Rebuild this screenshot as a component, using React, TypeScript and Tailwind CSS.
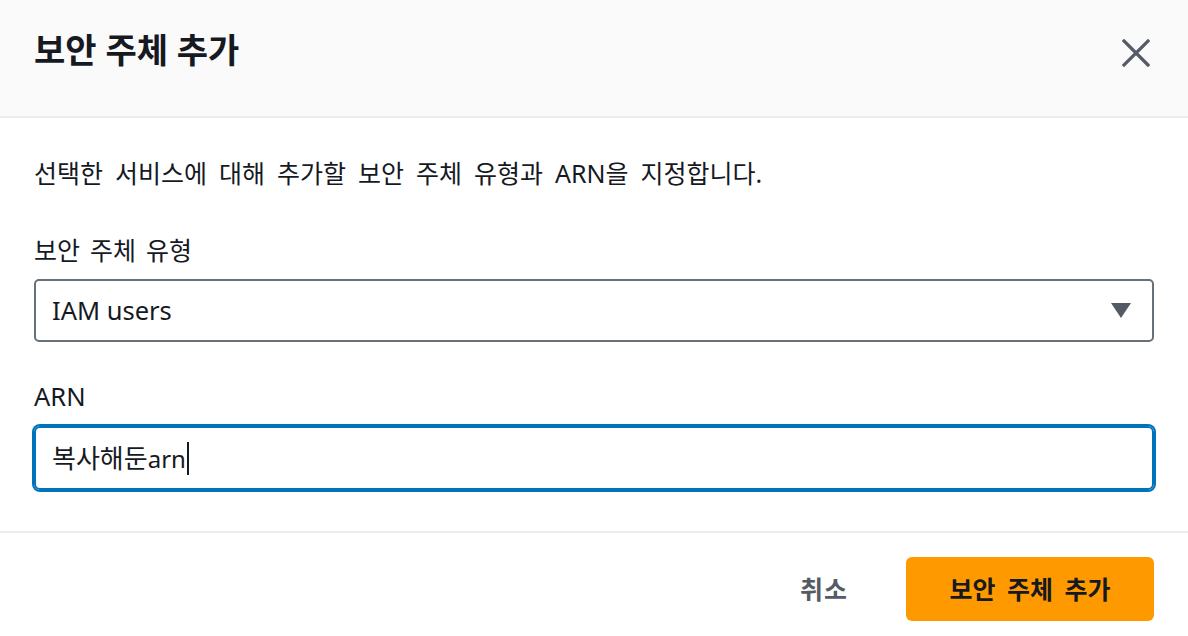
import React from "react";

const font = { fontFamily: '"Noto Sans", "Noto Sans CJK KR", sans-serif' };

function CloseIcon() {
  return (
    <svg width="28" height="28" viewBox="0 0 28 28" fill="none">
      <path d="M2 2 L26 26 M26 2 L2 26" stroke="#545b64" strokeWidth="3.2" strokeLinecap="square" />
    </svg>
  );
}

function Caret() {
  return (
    <svg width="20" height="15" viewBox="0 0 20 15">
      <path d="M0 0 H20 L10 15 Z" fill="#545b64" />
    </svg>
  );
}

export default function App() {
  return (
    <div className="w-[1188px] h-[636px] bg-white text-[#16191f] overflow-hidden" style={font}>
      {/* header */}
      <div className="h-[118px] bg-[#fafafa] border-b-2 border-[#eaeded] flex items-start justify-between pl-[34px] pr-[38px] pt-[28px]">
        <h1 className="text-[34px] leading-[44px] font-bold">보안 주체 추가</h1>
        <button className="mt-[11px]">
          <CloseIcon />
        </button>
      </div>

      {/* body */}
      <div className="px-[34px] pt-[39px] pb-[41px] border-b-2 border-[#eaeded]">
        <p className="text-[25px] leading-[32px] [word-spacing:5.5px]">
          선택한 서비스에 대해 추가할 보안 주체 유형과 ARN을 지정합니다.
        </p>

        <div className="mt-[45px] text-[25px] leading-[32px] [word-spacing:3.5px]">보안 주체 유형</div>
        <div className="mt-[13px] h-[63px] border-2 border-[#687078] rounded-[5px] flex items-center justify-between pl-[16px] pr-[21px]">
          <span className="text-[25.5px]">IAM users</span>
          <Caret />
        </div>

        <div className="mt-[38px] text-[25.5px] leading-[32px]">ARN</div>
        <div className="mt-[14px] h-[64px] border-2 border-[#0073bb] shadow-[0_0_0_2px_#0073bb] rounded-[6px] flex items-center pl-[16px]">
          <span className="text-[26px] leading-[34px]">
            복사해둔<span className="text-[24px]">arn</span>
          </span>
          <span className="w-[2px] h-[33px] bg-[#16191f] ml-[1px]" />
        </div>
      </div>

      {/* footer */}
      <div className="flex justify-end items-center gap-[58px] pt-[24px] pr-[34px]">
        <button className="text-[25px] font-bold text-[#545b64] leading-[32px] tracking-[1px]">취소</button>
        <button className="w-[248px] h-[64px] rounded-[6px] bg-[#ff9900] text-[25px] font-bold leading-[32px] [word-spacing:5px] text-[#16191f]">
          보안 주체 추가
        </button>
      </div>
    </div>
  );
}
